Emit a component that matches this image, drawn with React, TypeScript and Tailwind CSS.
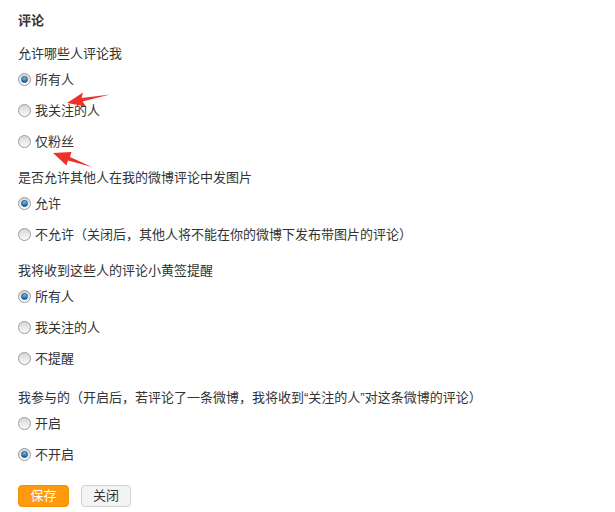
import React from "react";

type Opt = { label: string; checked?: boolean };

const sections: { title: string; options: Opt[] }[] = [
  {
    title: "允许哪些人评论我",
    options: [{ label: "所有人", checked: true }, { label: "我关注的人" }, { label: "仅粉丝" }],
  },
  {
    title: "是否允许其他人在我的微博评论中发图片",
    options: [
      { label: "允许", checked: true },
      { label: "不允许（关闭后，其他人将不能在你的微博下发布带图片的评论）" },
    ],
  },
  {
    title: "我将收到这些人的评论小黄签提醒",
    options: [{ label: "所有人", checked: true }, { label: "我关注的人" }, { label: "不提醒" }],
  },
  {
    title: "我参与的（开启后，若评论了一条微博，我将收到\u201c关注的人\u201d对这条微博的评论）",
    options: [{ label: "开启" }, { label: "不开启", checked: true }],
  },
];

const Radio: React.FC<{ checked?: boolean }> = ({ checked }) => (
  <span className="flex items-center justify-center w-[13px] h-[13px] rounded-full border border-[#9a9a9a] bg-gradient-to-b from-[#d6d6d6] to-[#fbfbfb] shrink-0">
    {checked && (
      <span className="w-[7px] h-[7px] rounded-full bg-gradient-to-b from-[#7fc4f0] to-[#0b5fa8] border border-[#15507f]" />
    )}
  </span>
);

export default function App() {
  return (
    <div
      className="relative w-[615px] h-[512px] bg-white text-[13px] text-[#333] pl-[18px] pt-[11px]"
      style={{ fontFamily: '"Liberation Sans", "Noto Sans CJK SC", sans-serif' }}
    >
      <div className="h-5 leading-5 font-bold">评论</div>

      {sections.map((s, i) => (
        <div key={i} className={i === 0 ? "mt-[13px]" : i === 3 ? "mt-[14px]" : "mt-[11px]"}>
          <div className="h-5 leading-5">{s.title}</div>
          {s.options.map((o) => (
            <div key={o.label} className="h-[31px] flex items-center gap-[4px]">
              <Radio checked={o.checked} />
              <span>{o.label}</span>
            </div>
          ))}
        </div>
      ))}

      <div className="flex gap-3 mt-[15px]">
        <button className="w-[51px] h-[22px] leading-[20px] rounded-sm bg-[#ff9a0e] border border-[#f39000] text-white text-[13px]">
          保存
        </button>
        <button className="w-[50px] h-[22px] leading-[20px] rounded-sm bg-[#f4f4f4] border border-[#cfcfcf] text-[#333] text-[13px]">
          关闭
        </button>
      </div>

      {/* red arrows drawn over the list */}
      <svg className="absolute left-0 top-0 pointer-events-none" width="615" height="512">
        <polygon points="67,103 83,92.5 81.5,98 110,94.5 82.5,101.5 86,106.5" fill="#f0302a" />
        <polygon points="53,153 71.5,152 70,157 92,167 68,160.5 66.5,165.5" fill="#f0302a" />
      </svg>
    </div>
  );
}
